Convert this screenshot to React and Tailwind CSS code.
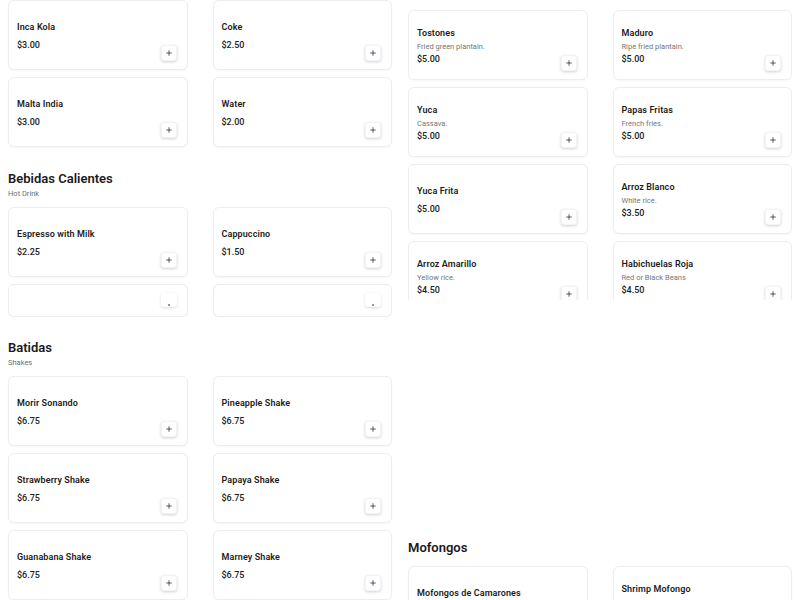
import { Plus } from "lucide-react";

const drinks = [
  { name: "Inca Kola", price: "$3.00" },
  { name: "Coke", price: "$2.50" },
  { name: "Malta India", price: "$3.00" },
  { name: "Water", price: "$2.00" },
];

const hot = [
  { name: "Espresso with Milk", price: "$2.25" },
  { name: "Cappuccino", price: "$1.50" },
];

const shakes = [
  { name: "Morir Sonando", price: "$6.75" },
  { name: "Pineapple Shake", price: "$6.75" },
  { name: "Strawberry Shake", price: "$6.75" },
  { name: "Papaya Shake", price: "$6.75" },
  { name: "Guanabana Shake", price: "$6.75" },
  { name: "Marney Shake", price: "$6.75" },
];

const sides = [
  { name: "Tostones", desc: "Fried green plantain.", price: "$5.00" },
  { name: "Maduro", desc: "Ripe fried plantain.", price: "$5.00" },
  { name: "Yuca", desc: "Cassava.", price: "$5.00" },
  { name: "Papas Fritas", desc: "French fries.", price: "$5.00" },
  { name: "Yuca Frita", price: "$5.00" },
  { name: "Arroz Blanco", desc: "White rice.", price: "$3.50" },
  { name: "Arroz Amarillo", desc: "Yellow rice.", price: "$4.50" },
  { name: "Habichuelas Roja", desc: "Red or Black Beans", price: "$4.50" },
];

const mofongos = [
  { name: "Mofongos de Camarones", price: "$15.00" },
  { name: "Shrimp Mofongo", desc: "Red or White Sauce", price: "$15.00" },
];

function AddButton() {
  return (
    <button className="w-4 h-4 shrink-0 self-end flex items-center justify-center bg-white rounded-[3px] border border-gray-100 shadow-[0_1px_3px_rgba(0,0,0,0.18)] text-gray-800">
      <Plus size={8} strokeWidth={2.25} />
    </button>
  );
}

function ItemCard({ item }) {
  return (
    <div className="h-[70px] bg-white border border-[#ededed] rounded-md shadow-[0_1px_2px_rgba(0,0,0,0.04)] flex px-2 py-2">
      <div className="flex-1 flex flex-col justify-center min-w-0 pt-[2px]">
        <div className="text-[9px] leading-[13px] font-semibold text-[#1c1c1c] tracking-[0.1px]">
          {item.name}
        </div>
        {item.desc && (
          <div className="text-[7.5px] leading-[13px] text-[#767676]">
            {item.desc}
          </div>
        )}
        <div
          className={
            "text-[9px] leading-[13px] font-medium text-[#222] " +
            (item.desc ? "" : "mt-[5px]")
          }
        >
          {item.price}
        </div>
      </div>
      <div className="flex items-end pr-[2px]">
        <AddButton />
      </div>
    </div>
  );
}

function CollapsedCard() {
  return (
    <div className="h-[33px] bg-white border border-[#ededed] rounded-md shadow-[0_1px_2px_rgba(0,0,0,0.04)] flex justify-end items-start px-2 pt-[8px] overflow-hidden">
      <div className="w-4 h-[14px] mr-[2px] bg-white rounded-[3px] shadow-[0_1px_3px_rgba(0,0,0,0.14)] flex items-end justify-center pb-[1px]">
        <span className="w-[2px] h-[2px] bg-gray-500 rounded-full"></span>
      </div>
    </div>
  );
}

function Grid({ children, className = "" }) {
  return (
    <div className={"grid grid-cols-2 gap-x-[25px] gap-y-[7px] " + className}>
      {children}
    </div>
  );
}

function SectionHead({ title, sub }) {
  return (
    <div>
      <h2 className="text-[13px] leading-[18px] font-semibold text-[#1a1a1a]">
        {title}
      </h2>
      {sub && (
        <p className="text-[7.5px] leading-[12px] text-[#6f6f6f]">{sub}</p>
      )}
    </div>
  );
}

export default function App() {
  return (
    <div
      className="w-[800px] h-[600px] overflow-hidden bg-white flex items-start"
      style={{ fontFamily: "Roboto, 'Noto Sans', sans-serif" }}
    >
      <div className="w-1/2 px-2">
        <Grid>
          {drinks.map((d) => (
            <ItemCard key={d.name} item={d} />
          ))}
        </Grid>

        <div className="mt-[23px]">
          <SectionHead title="Bebidas Calientes" sub="Hot Drink" />
        </div>
        <Grid className="mt-[7px] h-[110px] overflow-hidden">
          {hot.map((d) => (
            <ItemCard key={d.name} item={d} />
          ))}
          <CollapsedCard />
          <CollapsedCard />
        </Grid>

        <div className="mt-[22px]">
          <SectionHead title="Batidas" sub="Shakes" />
        </div>
        <Grid className="mt-[7px]">
          {shakes.map((d) => (
            <ItemCard key={d.name} item={d} />
          ))}
        </Grid>
      </div>

      <div className="w-1/2 px-2 pt-[10px]">
        <div className="h-[290px] overflow-hidden">
          <Grid>
            {sides.map((d) => (
              <ItemCard key={d.name} item={d} />
            ))}
          </Grid>
        </div>

        <div className="mt-[239px]">
          <SectionHead title="Mofongos" />
        </div>
        <Grid className="mt-[9px]">
          {mofongos.map((d) => (
            <ItemCard key={d.name} item={d} />
          ))}
        </Grid>
      </div>
    </div>
  );
}
